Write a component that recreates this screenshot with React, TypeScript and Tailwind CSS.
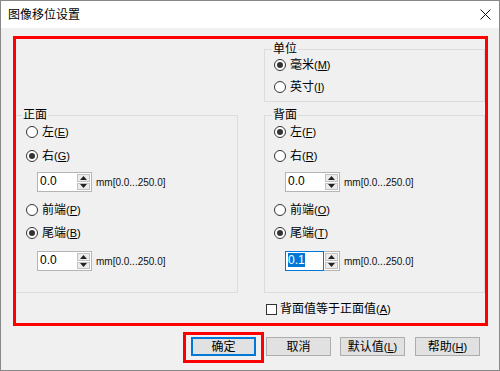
import React from 'react';

const font = "font-['Liberation_Sans','Noto_Sans_CJK_SC',sans-serif]";

function Key({ k }: { k: string }) {
  return (
    <span className="text-[11px]">
      (<u>{k}</u>)
    </span>
  );
}

function Radio({ checked, label, k }: { checked?: boolean; label: string; k: string }) {
  return (
    <div className="flex items-center h-[16px] gap-[4px]">
      <span className="w-[12px] h-[12px] rounded-full border border-[#333] bg-white flex items-center justify-center">
        {checked && <span className="w-[6px] h-[6px] rounded-full bg-[#333]" />}
      </span>
      <span className="text-[12px] leading-[16px]">
        {label}
        <Key k={k} />
      </span>
    </div>
  );
}

function Spin({ value, focused }: { value: string; focused?: boolean }) {
  return (
    <div className="flex items-center gap-[4px] ml-[11px]">
      <div className="flex w-[55px] h-[20px] border border-[#b4b4b4] bg-white">
        <div
          className={`flex-1 px-[2px] pt-[1px] text-[12px] leading-[15px] ${
            focused ? 'border border-[#0078d7] -m-[1px] mr-0' : ''
          }`}
        >
          {focused ? <span className="bg-[#0078d7] text-white">{value}</span> : value}
        </div>
        <div className="w-[15px] flex flex-col gap-[1px] p-[1px]">
          <div className="flex-1 border border-[#c2c2c2] bg-[#ececec] flex items-center justify-center">
            <svg width="7" height="4" viewBox="0 0 7 4">
              <path d="M3.5 0 L7 4 L0 4 Z" fill="#222" />
            </svg>
          </div>
          <div className="flex-1 border border-[#c2c2c2] bg-[#ececec] flex items-center justify-center">
            <svg width="7" height="4" viewBox="0 0 7 4">
              <path d="M0 0 L7 0 L3.5 4 Z" fill="#222" />
            </svg>
          </div>
        </div>
      </div>
      <span className="text-[10px] text-[#111]">mm[0.0...250.0]</span>
    </div>
  );
}

function SideGroup({
  title,
  opts,
  values,
  noLeft,
}: {
  title: string;
  opts: [string, string, boolean][];
  values: [string, boolean?][];
  noLeft?: boolean;
}) {
  return (
    <fieldset
      className={`border border-[#dcdcdc] h-[186px] pr-[8px] ${noLeft ? 'border-l-0 pl-[10px]' : 'pl-[9px]'}`}
    >
      <legend className={`text-[12px] leading-[16px] px-[1px] ${noLeft ? '-ml-[4px]' : '-ml-[2px]'}`}>{title}</legend>
      <div className="pt-[1px]">
        <Radio label={opts[0][0]} k={opts[0][1]} checked={opts[0][2]} />
      </div>
      <div className="mt-[8px]">
        <Radio label={opts[1][0]} k={opts[1][1]} checked={opts[1][2]} />
      </div>
      <div className="mt-[8px]">
        <Spin value={values[0][0]} focused={values[0][1]} />
      </div>
      <div className="mt-[10px]">
        <Radio label={opts[2][0]} k={opts[2][1]} checked={opts[2][2]} />
      </div>
      <div className="mt-[7px]">
        <Radio label={opts[3][0]} k={opts[3][1]} checked={opts[3][2]} />
      </div>
      <div className="mt-[10px]">
        <Spin value={values[1][0]} focused={values[1][1]} />
      </div>
    </fieldset>
  );
}

function Btn({ children, primary }: { children: React.ReactNode; primary?: boolean }) {
  return (
    <button
      className={`w-[65px] h-[19px] bg-[#e1e1e1] text-[12px] leading-[16px] flex items-center justify-center ${
        primary ? 'border-2 border-[#0078d7]' : 'border border-[#adadad]'
      }`}
    >
      {children}
    </button>
  );
}

export default function App() {
  return (
    <div className={`w-[500px] h-[371px] border border-[#888] bg-[#f0f0f0] flex flex-col text-black ${font}`}>
      <div className="h-[27px] bg-white flex items-center justify-between pl-[7px] pr-[8px]">
        <span className="text-[12px]">图像移位设置</span>
        <svg width="11" height="11" viewBox="0 0 11 11">
          <path d="M0.5 0.5 L10.5 10.5 M10.5 0.5 L0.5 10.5" stroke="#111" strokeWidth="1" />
        </svg>
      </div>

      <div className="ml-[12px] mt-[8px] w-[475px] h-[290px] border-[3px] border-[#ff0000] flex gap-[26px]">
        <div className="w-[222px] pt-[68px]">
          <SideGroup
            title="正面"
            noLeft
            opts={[
              ['左', 'E', false],
              ['右', 'G', true],
              ['前端', 'P', false],
              ['尾端', 'B', true],
            ]}
            values={[['0.0'], ['0.0']]}
          />
        </div>
        <div className="w-[221px] pt-[2px]">
          <fieldset className="border border-[#dcdcdc] h-[61px] pl-[9px]">
            <legend className="-ml-[2px] px-[1px] text-[12px] leading-[16px]">单位</legend>
            <Radio label="毫米" k="M" checked />
            <div className="mt-[6px]">
              <Radio label="英寸" k="I" />
            </div>
          </fieldset>
          <div className="mt-[5px]">
            <SideGroup
              title="背面"
              opts={[
                ['左', 'F', true],
                ['右', 'R', false],
                ['前端', 'O', false],
                ['尾端', 'T', true],
              ]}
              values={[['0.0'], ['0.1', true]]}
            />
          </div>
          <div className="mt-[8px] ml-[2px] flex items-center h-[16px] gap-[3px]">
            <span className="w-[11px] h-[11px] border border-[#333] bg-white" />
            <span className="text-[12px] leading-[16px]">
              背面值等于正面值
              <Key k="A" />
            </span>
          </div>
        </div>
      </div>

      <div className="flex items-start mt-[6px] ml-[182px]">
        <div className="w-[81px] h-[31px] border-[3px] border-[#ff0000] flex justify-center pt-[2px]">
          <Btn primary>确定</Btn>
        </div>
        <div className="mt-[5px] ml-[2px]">
          <Btn>取消</Btn>
        </div>
        <div className="mt-[5px] ml-[9px]">
          <Btn>
            默认值
            <Key k="L" />
          </Btn>
        </div>
        <div className="mt-[5px] ml-[10px]">
          <Btn>
            帮助
            <Key k="H" />
          </Btn>
        </div>
      </div>
    </div>
  );
}
